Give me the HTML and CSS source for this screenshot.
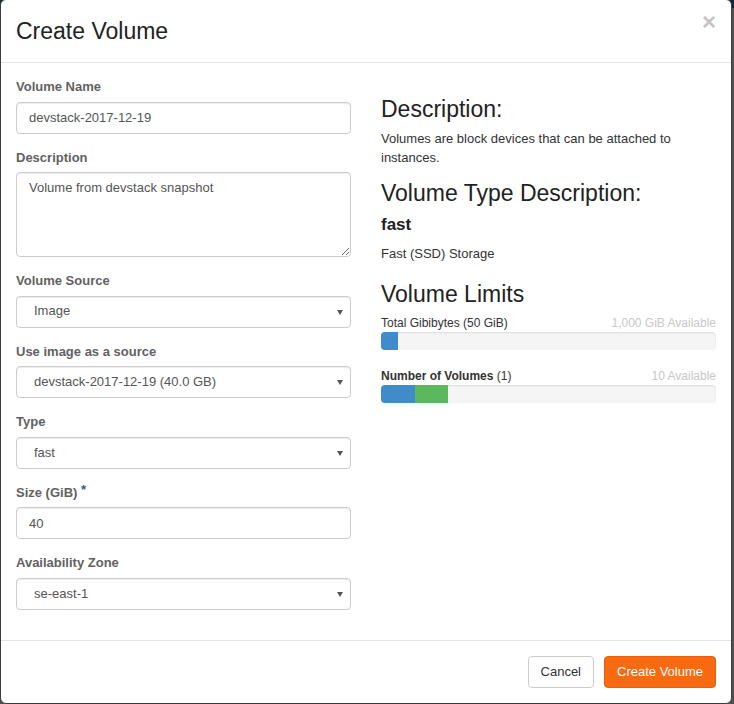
FILE: index.html
```html
<!DOCTYPE html>
<html>
<head>
<meta charset="utf-8">
<title>Create Volume</title>
<link rel="stylesheet" href="styles.css">
</head>
<body>
<div class="modal">
  <div class="modal-header">
    <h4 class="modal-title">Create Volume</h4>
    <span class="close">×</span>
  </div>
  <div class="modal-body">
    <div class="form-col">
      <div class="form-group">
        <label class="control-label">Volume Name</label>
        <input class="form-control" type="text" value="devstack-2017-12-19">
      </div>
      <div class="form-group">
        <label class="control-label">Description</label>
        <textarea class="form-control textarea">Volume from devstack snapshot</textarea>
      </div>
      <div class="form-group">
        <label class="control-label">Volume Source</label>
        <div class="select-wrap"><select class="form-control select"><option>Image</option></select></div>
      </div>
      <div class="form-group">
        <label class="control-label">Use image as a source</label>
        <div class="select-wrap"><select class="form-control select"><option>devstack-2017-12-19 (40.0 GB)</option></select></div>
      </div>
      <div class="form-group">
        <label class="control-label">Type</label>
        <div class="select-wrap"><select class="form-control select"><option>fast</option></select></div>
      </div>
      <div class="form-group">
        <label class="control-label">Size (GiB) <span class="req">*</span></label>
        <input class="form-control" type="text" value="40">
      </div>
      <div class="form-group">
        <label class="control-label">Availability Zone</label>
        <div class="select-wrap"><select class="form-control select"><option>se-east-1</option></select></div>
      </div>
    </div>
    <div class="info-col">
      <h3 class="h-desc">Description:</h3>
      <p class="p-desc">Volumes are block devices that can be attached to instances.</p>
      <h3 class="h-type">Volume Type Description:</h3>
      <h4 class="type-name">fast</h4>
      <p class="p-type">Fast (SSD) Storage</p>
      <h3 class="h-limits">Volume Limits</h3>
      <div class="quota">
        <div class="quota-label"><span>Total Gibibytes (50 GiB)</span><span class="avail">1,000 GiB Available</span></div>
        <div class="progress"><div class="bar bar-blue" style="width:5%"></div></div>
      </div>
      <div class="quota">
        <div class="quota-label"><span><strong>Number of Volumes</strong> (1)</span><span class="avail">10 Available</span></div>
        <div class="progress"><div class="bar bar-blue" style="width:10%"></div><div class="bar bar-green" style="width:10%"></div></div>
      </div>
    </div>
  </div>
  <div class="modal-footer">
    <button class="btn btn-default">Cancel</button>
    <button class="btn btn-primary">Create Volume</button>
  </div>
</div>
</body>
</html>
```

FILE: styles.css
```css
* { box-sizing: border-box; }
html, body { margin: 0; height: 100%; }
body {
  background: linear-gradient(#0c2738 0, #0c2738 8px, #505050 8px);
  font-family: "Liberation Sans", Arial, sans-serif;
  font-size: 13px;
  line-height: 1.42857;
  color: #333;
  overflow: hidden;
}
.modal {
  width: 732px;
  margin-top: -1px;
  background: #fff;
  border: 1px solid #3b3b3b;
  border-radius: 6px;
}
.modal-header {
  display: flex;
  justify-content: space-between;
  align-items: flex-start;
  padding: 15px;
  border-bottom: 1px solid #e5e5e5;
}
.modal-title {
  margin: 0;
  font-size: 23px;
  line-height: 32px;
  font-weight: normal;
  color: #222;
}
.close {
  font-size: 24px;
  font-weight: bold;
  line-height: 24px;
  color: #c4c4c4;
  margin-top: -5px;
}
.modal-body {
  display: grid;
  grid-template-columns: 1fr 1fr;
  column-gap: 30px;
  padding: 15px;
}
.form-group { margin-bottom: 15px; }
.control-label {
  display: block;
  font-weight: bold;
  color: #626262;
  margin-bottom: 5px;
}
.req {
  color: #1d5f95;
  font-size: 13px;
  vertical-align: top;
  position: relative;
  top: -3px;
}
.form-control {
  display: block;
  width: 100%;
  height: 32px;
  padding: 6px 12px;
  border: 1px solid #ccc;
  border-radius: 4px;
  box-shadow: inset 0 1px 1px rgba(0,0,0,.075);
  font-family: "Liberation Sans", Arial, sans-serif;
  font-size: 13px;
  line-height: 1.42857;
  color: #555;
  background: #fff;
  margin: 0;
}
.textarea {
  height: 85px;
  resize: vertical;
}
.select-wrap { position: relative; }
.select {
  -webkit-appearance: none;
  appearance: none;
  padding: 0 24px 0 17px;
}
.select-wrap::after {
  content: "";
  position: absolute;
  right: 8px;
  top: 14px;
  border-left: 3.5px solid transparent;
  border-right: 3.5px solid transparent;
  border-top: 5px solid #555;
  pointer-events: none;
}
.info-col h3 {
  font-size: 23px;
  line-height: 24px;
  font-weight: normal;
  color: #222;
  margin: 0;
}
.h-desc { margin-top: 19px !important; }
.p-desc { margin: 9px 0 0; }
.h-type { margin-top: 14px !important; }
.type-name {
  margin: 10px 0 0;
  font-size: 17px;
  line-height: 19px;
  font-weight: bold;
  color: #222;
}
.p-type { margin: 11px 0 0; }
.h-limits { margin-top: 18px !important; }
.quota { margin-top: 9px; }
.quota + .quota { margin-top: 18px; }
.quota-label {
  display: flex;
  justify-content: space-between;
  font-size: 12px;
  line-height: 17px;
  color: #333;
}
.avail { color: #c8c8c8; }
.progress {
  display: flex;
  height: 18px;
  background: #f5f5f5;
  border-radius: 4px;
  overflow: hidden;
  box-shadow: inset 0 1px 2px rgba(0,0,0,.1);
}
.bar { height: 100%; }
.bar-blue { background: #428bca; }
.bar-green { background: #5cb85c; }
.modal-footer {
  display: flex;
  justify-content: flex-end;
  gap: 10px;
  padding: 15px;
  border-top: 1px solid #e5e5e5;
}
.btn {
  height: 32px;
  padding: 0 12px;
  border-radius: 4px;
  font-family: "Liberation Sans", Arial, sans-serif;
  font-size: 13px;
  line-height: 30px;
  cursor: pointer;
}
.btn-default {
  background: #fff;
  color: #333;
  border: 1px solid #ccc;
}
.btn-primary {
  background: #f76a12;
  color: #fff;
  border: 1px solid #ec6108;
}
```
